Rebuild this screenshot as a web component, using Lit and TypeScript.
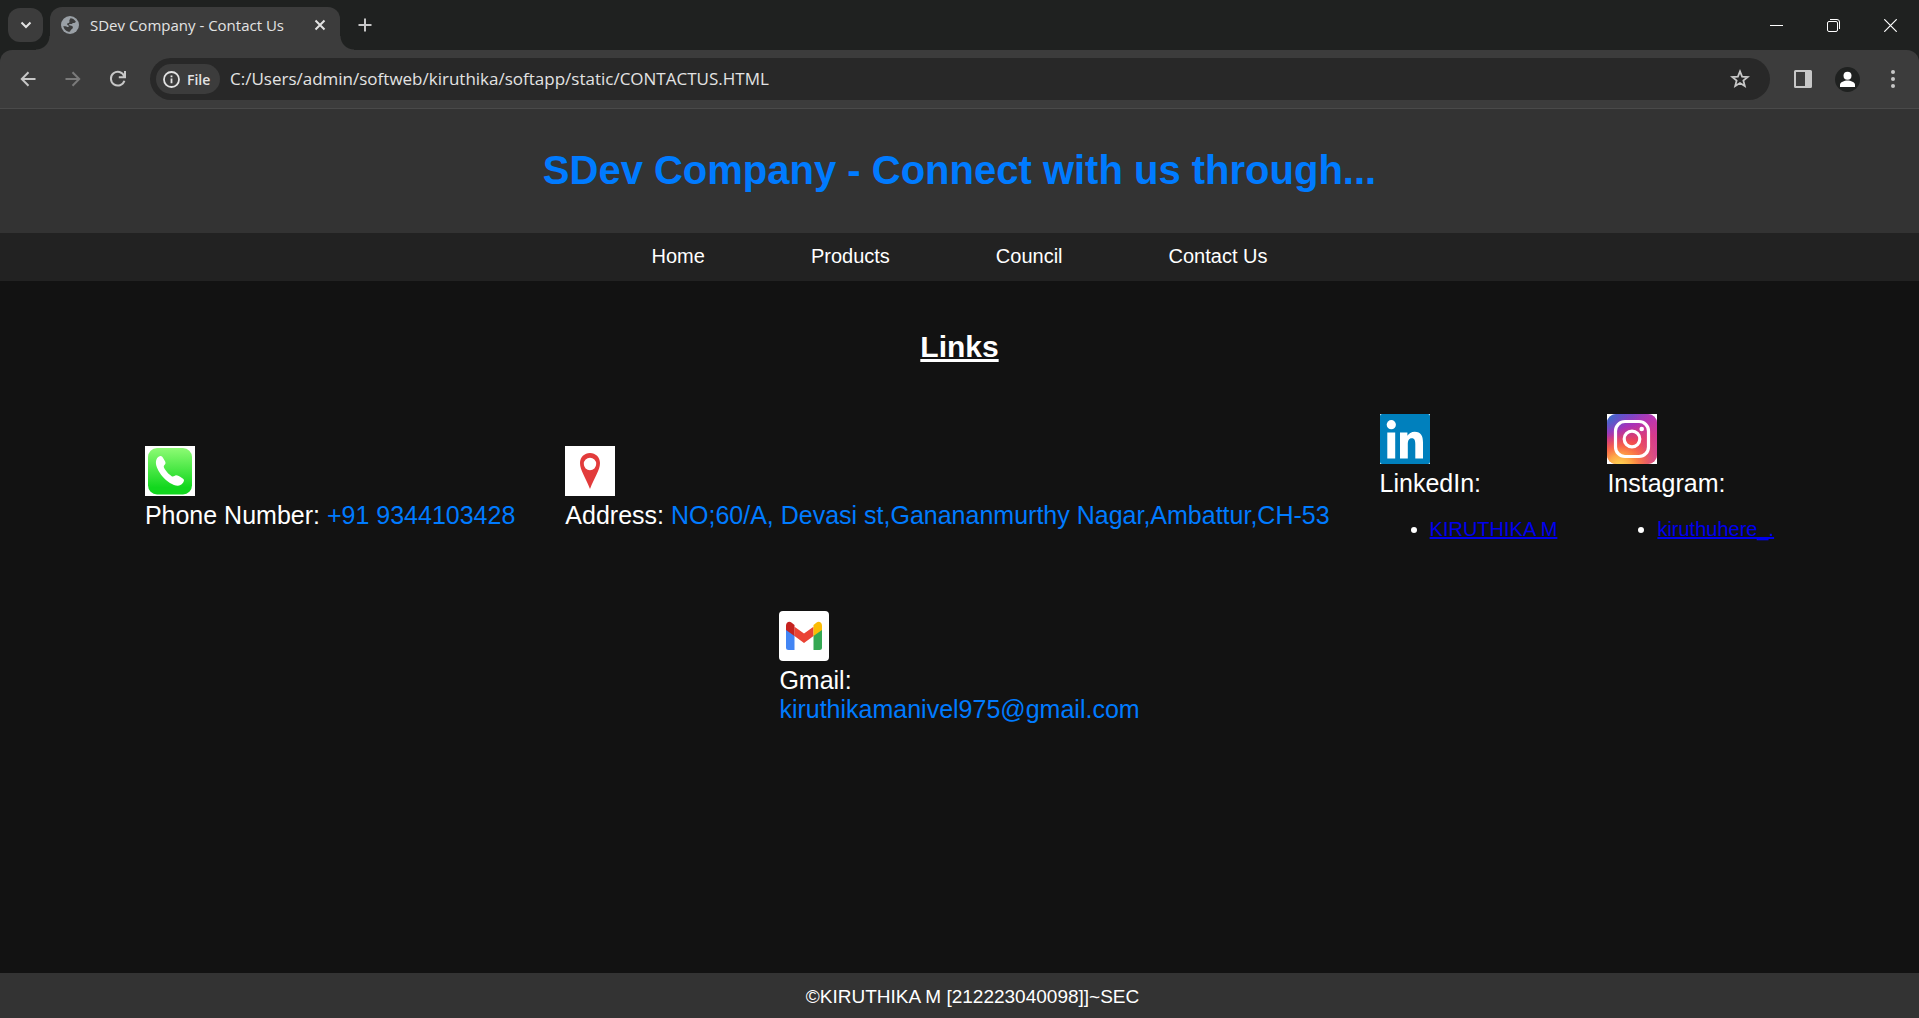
import { LitElement, html, css, svg } from "lit";
import { customElement } from "lit/decorators.js";

@customElement("browser-chrome")
export class BrowserChrome extends LitElement {
  static styles = css`
    :host {
      display: block;
      font-family: "Open Sans", "Noto Sans", sans-serif;
      color: #e3e3e3;
      background: #1f2120;
    }
    button {
      display: flex;
      align-items: center;
      justify-content: center;
      padding: 0;
      border: 0;
      background: none;
      color: #c7c7c7;
      font: inherit;
    }
    svg {
      display: block;
      flex: none;
    }
    .strip {
      display: flex;
      align-items: center;
      height: 50px;
      padding-left: 8px;
    }
    .search-tabs {
      width: 35px;
      height: 34px;
      margin-right: 7px;
      border-radius: 12px;
      background: #3c3c3c;
      color: #e3e3e3;
    }
    .tab {
      position: relative;
      display: flex;
      align-items: center;
      align-self: flex-end;
      box-sizing: border-box;
      width: 290px;
      height: 43px;
      padding: 0 10px 8px 10px;
      border-radius: 12px 12px 0 0;
      background: #3c3c3c;
    }
    .tab::before,
    .tab::after {
      content: "";
      position: absolute;
      bottom: 0;
      width: 14px;
      height: 14px;
    }
    .tab::before {
      right: 100%;
      background: radial-gradient(circle at 0 0, transparent 13px, #3c3c3c 14px);
    }
    .tab::after {
      left: 100%;
      background: radial-gradient(circle at 100% 0, transparent 13px, #3c3c3c 14px);
    }
    .title {
      flex: 1;
      margin-left: 10px;
      font-size: 15px;
      line-height: 20px;
      white-space: nowrap;
    }
    .close-tab {
      width: 20px;
      height: 20px;
      color: #e3e3e3;
    }
    .new-tab {
      width: 34px;
      height: 34px;
      margin-left: 8px;
    }
    .window {
      display: flex;
      margin-left: auto;
    }
    .window button {
      width: 57px;
      height: 50px;
      color: #ffffff;
    }
    .toolbar {
      display: flex;
      align-items: center;
      height: 58px;
      padding: 0 4px 0 5px;
      border-bottom: 1px solid #4a4a4a;
      border-radius: 12px 12px 0 0;
      background: #3c3c3c;
    }
    .tool {
      width: 45px;
      height: 42px;
    }
    .tool.off {
      color: #7a7a7a;
    }
    .omnibox {
      display: flex;
      flex: 1;
      align-items: center;
      box-sizing: border-box;
      height: 42px;
      margin: 0 10px;
      padding: 0 12px 0 6px;
      border-radius: 21px;
      background: #282828;
    }
    .chip {
      justify-content: flex-start;
      gap: 7px;
      width: 64px;
      height: 30px;
      padding-left: 7px;
      border-radius: 15px;
      background: #3c3c3c;
      color: #e3e3e3;
      font-size: 14px;
      font-weight: 600;
    }
    .url {
      flex: 1;
      min-width: 0;
      padding: 0 0 0 10px;
      border: 0;
      outline: 0;
      background: none;
      color: #e3e3e3;
      font-family: inherit;
      font-size: 17px;
      line-height: 24px;
    }
    .star {
      width: 36px;
      height: 36px;
    }
  `;

  render() {
    return html`
      <div class="strip">
        <button class="search-tabs" aria-label="Search tabs">
          <svg width="12" height="12" viewBox="0 0 12 12" fill="none" stroke="currentColor" stroke-width="2">
            <path d="M1.5 3.5 6 8l4.5-4.5" />
          </svg>
        </button>
        <div class="tab">
          <svg width="20" height="20" viewBox="0 0 20 20">
            <circle cx="10" cy="10" r="9" fill="#9aa0a6" />
            <path
              d="M10.5 3.2c2.3.2 4.300 1.500 5.400 3.500-.6.9-1.700 1.300-2.700 1.200-.7 0-.9.700-1.500 1-.8.4-1.700-.2-2.400.3-.7.500.2 1.300 1 1.300 1.300.1 2.600.6 2.600 2-.1 1.500-1.900 1.700-2.400 3-.2.500-.2 1.200-.9 1.300-3.200-.2-5.800-2.800-6.200-5.900 1.300.2 2.900.2 3.900 1 .8.600 1.700-.1 1.400-1-.3-.9-1.900-.7-1.700-1.800.2-1 1.600-.8 2.300-1.500.6-.7-.2-1.500.1-2.400.2-.700.700-1.400 1.100-2z"
              fill="#3c3c3c"
            />
          </svg>
          <span class="title">SDev Company - Contact Us</span>
          <button class="close-tab" aria-label="Close tab">
            <svg width="12" height="12" viewBox="0 0 12 12" stroke="currentColor" stroke-width="2">
              <path d="m1.500 1.500 9 9m0-9-9 9" />
            </svg>
          </button>
        </div>
        <button class="new-tab" aria-label="New tab">
          <svg width="14" height="14" viewBox="0 0 14 14" stroke="currentColor" stroke-width="2">
            <path d="M7 .5v13M.5 7h13" />
          </svg>
        </button>
        <div class="window">
          <button aria-label="Minimize">
            <svg width="13" height="13" viewBox="0 0 13 13" stroke="currentColor"><path d="M0 6.500h13" /></svg>
          </button>
          <button aria-label="Restore">
            <svg width="13" height="13" viewBox="0 0 13 13" fill="none" stroke="currentColor">
              <rect x=".5" y="2.500" width="10" height="10" rx="1.500" />
              <path d="M3 .5h7a2.500 2.500 0 0 1 2.500 2.500v7" />
            </svg>
          </button>
          <button aria-label="Close">
            <svg width="13" height="13" viewBox="0 0 13 13" stroke="currentColor" stroke-width="1.200">
              <path d="m.3.300 12.400 12.400m0-12.400L.3 12.700" />
            </svg>
          </button>
        </div>
      </div>
      <div class="toolbar">
        <button class="tool" aria-label="Back">
          <svg width="16" height="16" viewBox="0 0 16 16" fill="none" stroke="currentColor" stroke-width="2">
            <path d="M15.500 8H2M8.500 1.300 1.800 8l6.700 6.700" />
          </svg>
        </button>
        <button class="tool off" aria-label="Forward">
          <svg width="16" height="16" viewBox="0 0 16 16" fill="none" stroke="currentColor" stroke-width="2">
            <path d="M.5 8H14M7.500 1.300 14.200 8l-6.700 6.700" />
          </svg>
        </button>
        <button class="tool" aria-label="Reload">
          <svg width="18" height="18" viewBox="0 0 18 18" fill="none" stroke="currentColor" stroke-width="2">
            <path d="M15.400 10.800A6.900 6.900 0 1 1 15.200 6M16 1v6.200H9.800" />
          </svg>
        </button>
        <div class="omnibox">
          <button class="chip">
            <svg width="17" height="17" viewBox="0 0 17 17" fill="none" stroke="currentColor" stroke-width="1.800">
              <circle cx="8.500" cy="8.500" r="7.500" />
              <path d="M8.500 7.600v4.700M8.500 4.400v1.900" />
            </svg>
            File
          </button>
          <input
            class="url"
            type="text"
            aria-label="Address"
            spellcheck="false"
            .value=${"C:/Users/admin/softweb/kiruthika/softapp/static/CONTACTUS.HTML"}
          />
          <button class="star" aria-label="Bookmark">
            <svg width="20" height="20" viewBox="0 0 20 20" fill="none" stroke="currentColor" stroke-width="1.800">
              <path d="m10 2.400 2.100 5.200 5.700.4-4.400 3.600 1.400 5.500-4.800-3-4.800 3 1.400-5.500L2.200 8l5.700-.4z" />
            </svg>
          </button>
        </div>
        <button class="tool" aria-label="Side panel">
          <svg width="18" height="18" viewBox="0 0 18 18" fill="currentColor">
            <path
              fill-rule="evenodd"
              d="M1.500 0h15A1.500 1.500 0 0 1 18 1.500v15a1.500 1.500 0 0 1-1.500 1.500h-15A1.500 1.500 0 0 1 0 16.500v-15A1.500 1.500 0 0 1 1.500 0zM2 2v14h9V2z"
            />
          </svg>
        </button>
        <button class="tool" aria-label="Profile">
          <svg width="25" height="25" viewBox="0 0 25 25">
            <circle cx="12.500" cy="12.500" r="12.500" fill="#1f2120" />
            <circle cx="12.500" cy="8.800" r="4" fill="#fff" />
            <path d="M5 20v-2.200c0-2.700 4.300-4.300 7.500-4.300s7.500 1.600 7.500 4.300V20z" fill="#fff" />
          </svg>
        </button>
        <button class="tool" aria-label="Menu">
          <svg width="4" height="18" viewBox="0 0 4 18" fill="currentColor">
            <circle cx="2" cy="2" r="2" /><circle cx="2" cy="9" r="2" /><circle cx="2" cy="16" r="2" />
          </svg>
        </button>
      </div>
    `;
  }
}

const phoneIcon = svg`
  <defs>
    <linearGradient id="g" x1="0" y1="0" x2="0" y2="1">
      <stop offset="0" stop-color="#8dfb74" />
      <stop offset=".85" stop-color="#12d71e" />
    </linearGradient>
  </defs>
  <rect width="50" height="50" fill="#fff" />
  <rect x="3" y="2" width="44" height="46.500" rx="9" fill="url(#g)" />
  <path fill="#fff" d="M15.200 10c1.600-.3 2.300 1 3.200 2.600 1.100 2 2.600 3.700 2 5.200-.5 1.300-1.900 1.800-1.600 3.300.5 2.300 5.300 8 8.200 9.300 1.800.7 2.400-1 4.100-1.100 1.700 0 3.500 1.400 5.500 2.400 1.700.9 2.800 1.800 2.300 3.400-.7 2.400-3.200 4.500-5.900 4.600-4.400.2-11.400-4.300-15.500-9.200C13.600 25.800 10.700 20.300 10.900 16c.1-2.900 1.900-5.500 4.300-6z" />
`;

const pinIcon = svg`
  <rect width="50" height="50" fill="#fff" />
  <path fill="#e23b3b" fill-rule="evenodd" d="M25 7c5.600 0 10 4.300 10 10 0 7-5.500 14.500-10 26-4.500-11.500-10-19-10-26 0-5.700 4.400-10 10-10zm0 4.800a6.200 6.200 0 1 0 0 12.400 6.200 6.200 0 0 0 0-12.400z" />
`;

const linkedinIcon = svg`
  <rect width="50" height="50" fill="#fff" />
  <rect width="50" height="50" rx="2" fill="#0080bd" />
  <circle cx="11.300" cy="10.700" r="4.600" fill="#fff" />
  <path fill="#fff" d="M7.300 18.500h7.900v26H7.300zM20 18.500h7.400v3.300c1.400-2.300 4-4 7.300-4 6.300 0 8.300 4.200 8.300 10.700v16h-7.700V30.300c0-3.300-.5-6-3.500-6s-4 2.600-4 6v14.200H20z" />
`;

const instagramIcon = svg`
  <defs>
    <linearGradient id="g" x1=".15" y1="0" x2=".45" y2="1">
      <stop offset="0" stop-color="#5a55d0" />
      <stop offset=".3" stop-color="#a933b8" />
      <stop offset=".62" stop-color="#f0434f" />
      <stop offset="1" stop-color="#fd7a3c" />
    </linearGradient>
    <radialGradient id="y" cx=".25" cy="1.050" r=".65">
      <stop offset="0" stop-color="#ffdd55" />
      <stop offset=".35" stop-color="#ffb648" stop-opacity=".85" />
      <stop offset="1" stop-color="#ff543e" stop-opacity="0" />
    </radialGradient>
    <radialGradient id="b" cx="0" cy=".05" r=".42">
      <stop offset="0" stop-color="#3771c8" />
      <stop offset="1" stop-color="#5a55d0" stop-opacity="0" />
    </radialGradient>
    <linearGradient id="p" x1=".5" y1="0" x2="1" y2="0">
      <stop offset="0" stop-color="#c837ab" stop-opacity="0" />
      <stop offset="1" stop-color="#c837ab" stop-opacity=".75" />
    </linearGradient>
  </defs>
  <rect width="50" height="50" fill="#fff" />
  <rect width="50" height="50" rx="9" fill="url(#g)" />
  <rect width="50" height="50" rx="9" fill="url(#p)" />
  <rect width="50" height="50" rx="9" fill="url(#y)" />
  <rect width="50" height="50" rx="9" fill="url(#b)" />
  <g fill="none" stroke="#fff" stroke-width="3.200">
    <rect x="8.500" y="7.500" width="33" height="35" rx="9.500" />
    <circle cx="25" cy="25" r="7.800" />
  </g>
  <circle cx="34.700" cy="15" r="2.300" fill="#fff" />
`;

const gmailIcon = svg`
  <rect width="50" height="50" rx="4" fill="#fff" />
  <path fill="#4285f4" d="M7 18v18.500A2.500 2.500 0 0 0 9.500 39h6V24z" />
  <path fill="#34a853" d="M43 18v18.500a2.500 2.500 0 0 1-2.500 2.500h-6V24z" />
  <path fill="#ea4335" d="M15.500 15.700 25 22.500l9.500-6.800V25L25 32l-9.500-7z" />
  <path fill="#c5221f" d="M7 19v-4.500c0-3.200 3.200-4.600 5.400-3L15.500 14v11z" />
  <path fill="#fbbc04" d="M43 19v-4.500c0-3.200-3.200-4.600-5.400-3L34.500 14v11z" />
`;

@customElement("contact-icon")
export class ContactIcon extends LitElement {
  static properties = { name: { type: String } };
  declare name: string;

  static styles = css`
    :host {
      display: block;
      width: 50px;
      height: 50px;
    }
    svg {
      display: block;
    }
  `;

  render() {
    const art: Record<string, unknown> = {
      phone: phoneIcon,
      pin: pinIcon,
      linkedin: linkedinIcon,
      instagram: instagramIcon,
      gmail: gmailIcon,
    };
    return html`<svg width="50" height="50" viewBox="0 0 50 50" aria-hidden="true">${art[this.name]}</svg>`;
  }
}

@customElement("app-root")
export class AppRoot extends LitElement {
  static styles = css`
    :host {
      display: flex;
      flex-direction: column;
      min-height: 100vh;
      background: #121212;
      color: #ffffff;
      font-family: "Liberation Sans", Arial, sans-serif;
    }
    header {
      padding: 38px 20px 40px;
      background: #333333;
      text-align: center;
    }
    h1 {
      margin: 0;
      color: #007bff;
      font-size: 40px;
      line-height: 46px;
    }
    nav {
      display: flex;
      justify-content: center;
      gap: 106px;
      padding: 12px 0 13px;
      background: #222222;
      font-size: 20px;
      line-height: 23px;
    }
    nav a {
      color: #ffffff;
      text-decoration: none;
    }
    main {
      flex: 1;
      padding: 49px 20px 20px;
    }
    h2 {
      margin: 0 0 50px;
      font-size: 30px;
      line-height: 34px;
      text-align: center;
      text-decoration: underline;
    }
    .contacts {
      display: flex;
      flex-wrap: wrap;
      align-items: center;
      justify-content: center;
      gap: 50px;
      font-size: 25px;
      line-height: 29px;
    }
    .label {
      margin: 5px 0 0;
    }
    .value {
      color: #007bff;
    }
    .email {
      display: block;
    }
    ul {
      margin: 20px 0;
      padding-left: 50px;
      font-size: 20px;
      line-height: 23px;
    }
    ul a {
      color: #0000ee;
    }
    footer {
      padding: 13px 0 11px 26px;
      background: #333333;
      font-size: 19px;
      line-height: 21px;
      text-align: center;
    }
  `;

  render() {
    return html`
      <browser-chrome></browser-chrome>
      <header><h1>SDev Company - Connect with us through...</h1></header>
      <nav>
        <a href="#">Home</a>
        <a href="#">Products</a>
        <a href="#">Council</a>
        <a href="#">Contact Us</a>
      </nav>
      <main>
        <h2>Links</h2>
        <div class="contacts">
          <section>
            <contact-icon name="phone"></contact-icon>
            <p class="label">Phone Number: <span class="value">+91 9344103428</span></p>
          </section>
          <section>
            <contact-icon name="pin"></contact-icon>
            <p class="label">
              Address: <span class="value">NO;60/A, Devasi st,Ganananmurthy Nagar,Ambattur,CH-53</span>
            </p>
          </section>
          <section>
            <contact-icon name="linkedin"></contact-icon>
            <p class="label">LinkedIn:</p>
            <ul>
              <li><a href="#">KIRUTHIKA M</a></li>
            </ul>
          </section>
          <section>
            <contact-icon name="instagram"></contact-icon>
            <p class="label">Instagram:</p>
            <ul>
              <li><a href="#">kiruthuhere_.</a></li>
            </ul>
          </section>
          <section>
            <contact-icon name="gmail"></contact-icon>
            <p class="label">Gmail: <span class="value email">kiruthikamanivel975@gmail.com</span></p>
          </section>
        </div>
      </main>
      <footer>©KIRUTHIKA M [212223040098]]~SEC</footer>
    `;
  }
}
